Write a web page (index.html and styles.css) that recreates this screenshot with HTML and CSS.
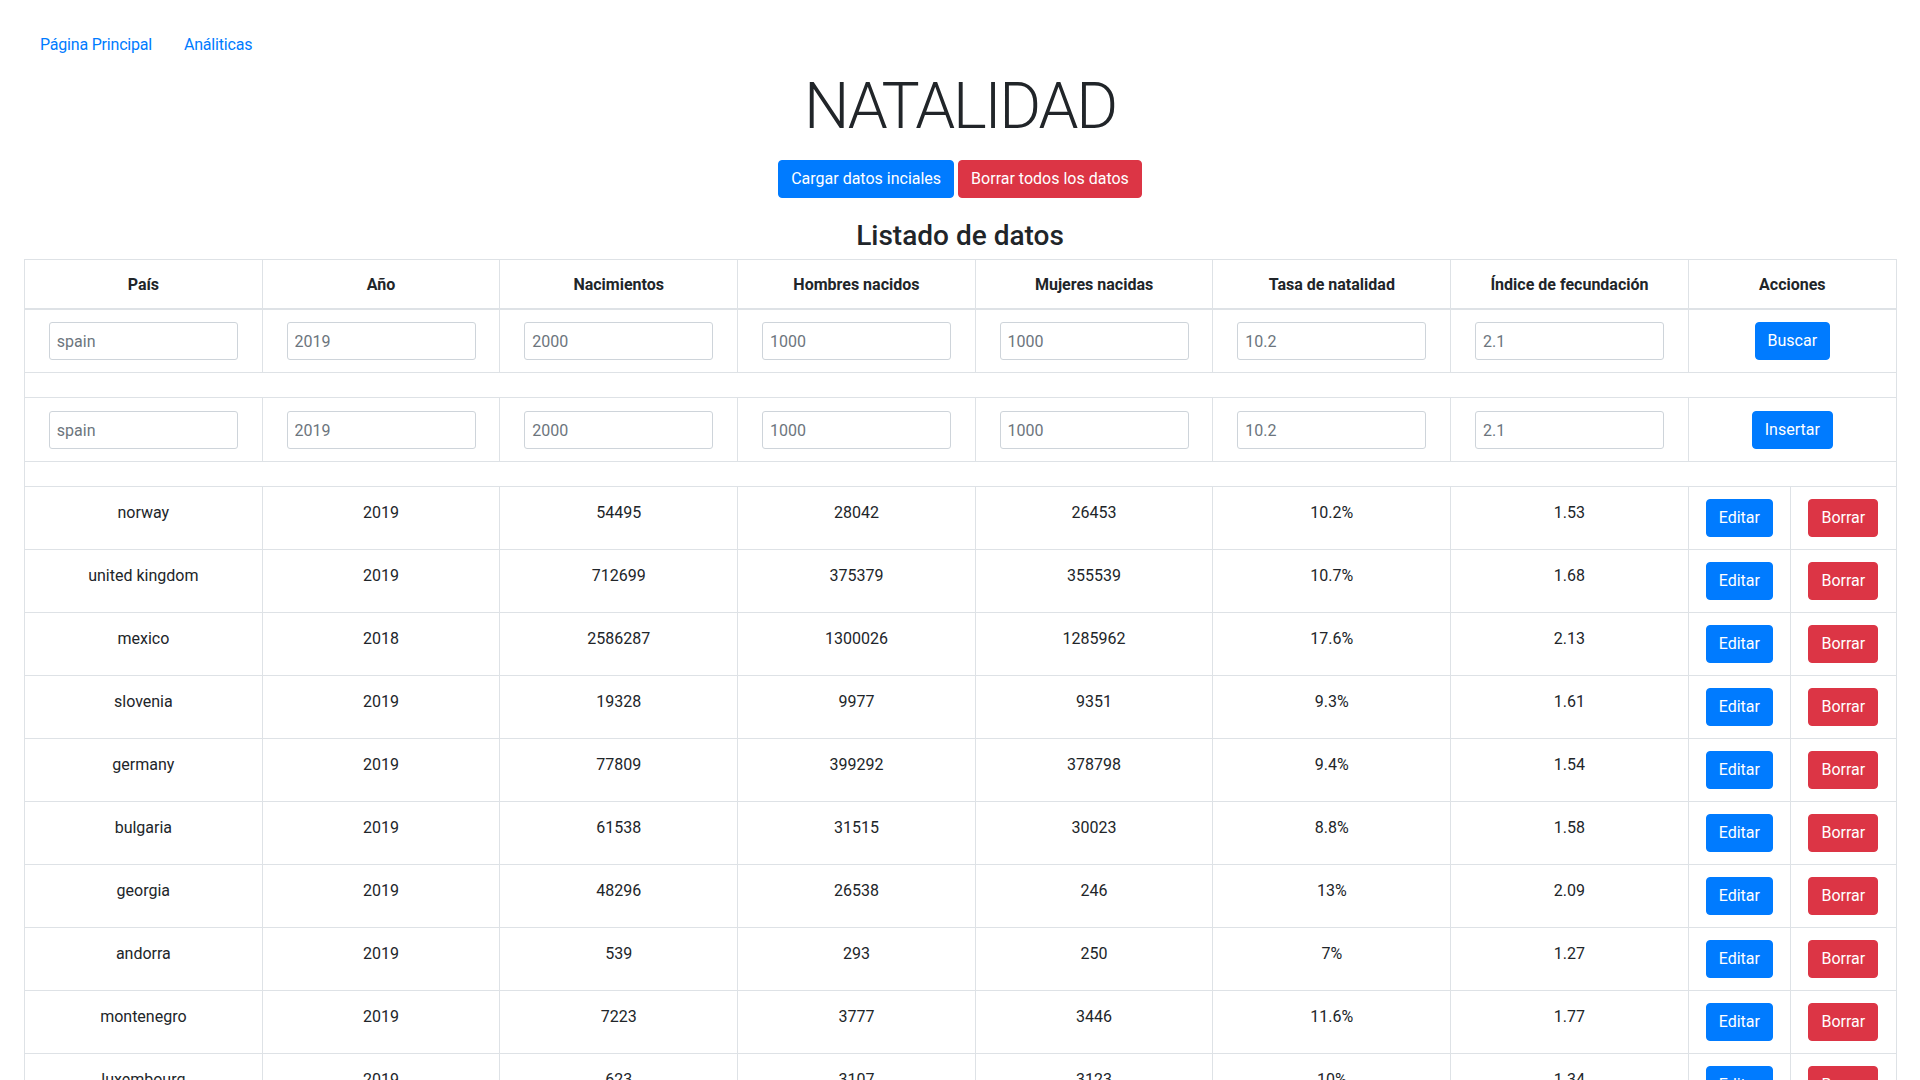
FILE: index.html
```html
<!DOCTYPE html>
<html lang="es">
<head>
<meta charset="utf-8">
<title>Natalidad</title>
<link rel="stylesheet" href="styles.css">
</head>
<body>
<div class="page">
  <nav class="nav">
    <a class="nav-link" href="#">Página Principal</a>
    <a class="nav-link" href="#">Análiticas</a>
  </nav>
  <h1 class="title">NATALIDAD</h1>
  <div class="top-actions">
    <button class="btn btn-primary">Cargar datos inciales</button>
    <button class="btn btn-danger">Borrar todos los datos</button>
  </div>
  <h3 class="subtitle">Listado de datos</h3>
  <table class="table">
    <colgroup>
      <col class="c-data"><col class="c-data"><col class="c-data"><col class="c-data"><col class="c-data"><col class="c-data"><col class="c-data"><col class="c-edit"><col class="c-del">
    </colgroup>
    <thead>
      <tr>
        <th>País</th>
        <th>Año</th>
        <th>Nacimientos</th>
        <th>Hombres nacidos</th>
        <th>Mujeres nacidas</th>
        <th>Tasa de natalidad</th>
        <th>Índice de fecundación</th>
        <th colspan="2">Acciones</th>
      </tr>
    </thead>
    <tbody>
      <tr class="form-row">
        <td><input class="field" placeholder="spain"></td>
        <td><input class="field" placeholder="2019"></td>
        <td><input class="field" placeholder="2000"></td>
        <td><input class="field" placeholder="1000"></td>
        <td><input class="field" placeholder="1000"></td>
        <td><input class="field" placeholder="10.2"></td>
        <td><input class="field" placeholder="2.1"></td>
        <td colspan="2"><button class="btn btn-primary">Buscar</button></td>
      </tr>
      <tr class="spacer"><td colspan="9"></td></tr>
      <tr class="form-row form-row-insert">
        <td><input class="field" placeholder="spain"></td>
        <td><input class="field" placeholder="2019"></td>
        <td><input class="field" placeholder="2000"></td>
        <td><input class="field" placeholder="1000"></td>
        <td><input class="field" placeholder="1000"></td>
        <td><input class="field" placeholder="10.2"></td>
        <td><input class="field" placeholder="2.1"></td>
        <td colspan="2"><button class="btn btn-primary">Insertar</button></td>
      </tr>
      <tr class="spacer"><td colspan="9"></td></tr>
      <tr class="data-row"><td>norway</td><td>2019</td><td>54495</td><td>28042</td><td>26453</td><td>10.2%</td><td>1.53</td><td class="act"><button class="btn btn-primary">Editar</button></td><td class="act"><button class="btn btn-danger">Borrar</button></td></tr>
      <tr class="data-row"><td>united kingdom</td><td>2019</td><td>712699</td><td>375379</td><td>355539</td><td>10.7%</td><td>1.68</td><td class="act"><button class="btn btn-primary">Editar</button></td><td class="act"><button class="btn btn-danger">Borrar</button></td></tr>
      <tr class="data-row"><td>mexico</td><td>2018</td><td>2586287</td><td>1300026</td><td>1285962</td><td>17.6%</td><td>2.13</td><td class="act"><button class="btn btn-primary">Editar</button></td><td class="act"><button class="btn btn-danger">Borrar</button></td></tr>
      <tr class="data-row"><td>slovenia</td><td>2019</td><td>19328</td><td>9977</td><td>9351</td><td>9.3%</td><td>1.61</td><td class="act"><button class="btn btn-primary">Editar</button></td><td class="act"><button class="btn btn-danger">Borrar</button></td></tr>
      <tr class="data-row"><td>germany</td><td>2019</td><td>77809</td><td>399292</td><td>378798</td><td>9.4%</td><td>1.54</td><td class="act"><button class="btn btn-primary">Editar</button></td><td class="act"><button class="btn btn-danger">Borrar</button></td></tr>
      <tr class="data-row"><td>bulgaria</td><td>2019</td><td>61538</td><td>31515</td><td>30023</td><td>8.8%</td><td>1.58</td><td class="act"><button class="btn btn-primary">Editar</button></td><td class="act"><button class="btn btn-danger">Borrar</button></td></tr>
      <tr class="data-row"><td>georgia</td><td>2019</td><td>48296</td><td>26538</td><td>246</td><td>13%</td><td>2.09</td><td class="act"><button class="btn btn-primary">Editar</button></td><td class="act"><button class="btn btn-danger">Borrar</button></td></tr>
      <tr class="data-row"><td>andorra</td><td>2019</td><td>539</td><td>293</td><td>250</td><td>7%</td><td>1.27</td><td class="act"><button class="btn btn-primary">Editar</button></td><td class="act"><button class="btn btn-danger">Borrar</button></td></tr>
      <tr class="data-row"><td>montenegro</td><td>2019</td><td>7223</td><td>3777</td><td>3446</td><td>11.6%</td><td>1.77</td><td class="act"><button class="btn btn-primary">Editar</button></td><td class="act"><button class="btn btn-danger">Borrar</button></td></tr>
      <tr class="data-row"><td>luxembourg</td><td>2019</td><td>623</td><td>3107</td><td>3123</td><td>10%</td><td>1.34</td><td class="act"><button class="btn btn-primary">Editar</button></td><td class="act"><button class="btn btn-danger">Borrar</button></td></tr>
    </tbody>
  </table>
</div>
</body>
</html>
```
FILE: styles.css
```css
html, body {
  margin: 0;
  padding: 0;
  background: #fff;
}

body {
  font-family: "Segoe UI", Roboto, "Noto Sans", "Liberation Sans", sans-serif;
  font-size: 16px;
  line-height: 1.5;
  color: #212529;
}

.page {
  padding: 25px 24px 0;
}

.nav {
  display: flex;
  height: 40px;
}

.nav-link {
  display: block;
  padding: 8px 16px;
  color: #007bff;
  text-decoration: none;
  line-height: 24px;
  letter-spacing: -0.2px;
}

.title {
  margin: 3px 0 0;
  text-align: center;
  font-size: 64px;
  font-weight: 300;
  line-height: 77px;
  letter-spacing: -2.2px;
}

.top-actions {
  display: flex;
  justify-content: center;
  gap: 4px;
  margin-top: 15px;
}

.btn {
  display: inline-block;
  font-family: inherit;
  font-size: 16px;
  line-height: 24px;
  padding: 6px 12px;
  border: 1px solid transparent;
  border-radius: 4px;
  color: #fff;
  cursor: pointer;
  vertical-align: middle;
}

.btn-primary {
  background: #007bff;
  border-color: #007bff;
}

.btn-danger {
  background: #dc3545;
  border-color: #dc3545;
}

.subtitle {
  margin: 21px 0 6px;
  text-align: center;
  font-size: 28px;
  font-weight: 500;
  line-height: 34px;
}

.table {
  width: 1872px;
  table-layout: fixed;
  border-collapse: collapse;
  color: #212529;
}

.c-data { width: 237.7px; }
.c-edit { width: 102px; }
.c-del { width: 106px; }

.table th,
.table td {
  border: 1px solid #dee2e6;
  padding: 12px;
  text-align: center;
  vertical-align: top;
  line-height: 24px;
}

.table th {
  font-weight: 700;
  vertical-align: bottom;
  padding: 13px 12px 11px;
  border-bottom: 2px solid #dee2e6;
}

.data-row td {
  padding: 14px 12px 10px;
}

.data-row td.act {
  padding: 12px;
}

.form-row td {
  vertical-align: middle;
}

.form-row-insert td {
  padding-top: 13px;
}

.spacer td {
  padding: 12px;
  height: 0;
  line-height: 0;
}

.field {
  display: block;
  box-sizing: border-box;
  width: 189px;
  height: 38px;
  margin: 0 auto;
  padding: 0 7px;
  font-family: inherit;
  font-size: 16px;
  color: #495057;
  background: #fff;
  border: 1px solid #ced4da;
  border-radius: 3px;
}

.field::placeholder {
  color: #6c757d;
  opacity: 1;
}
```
